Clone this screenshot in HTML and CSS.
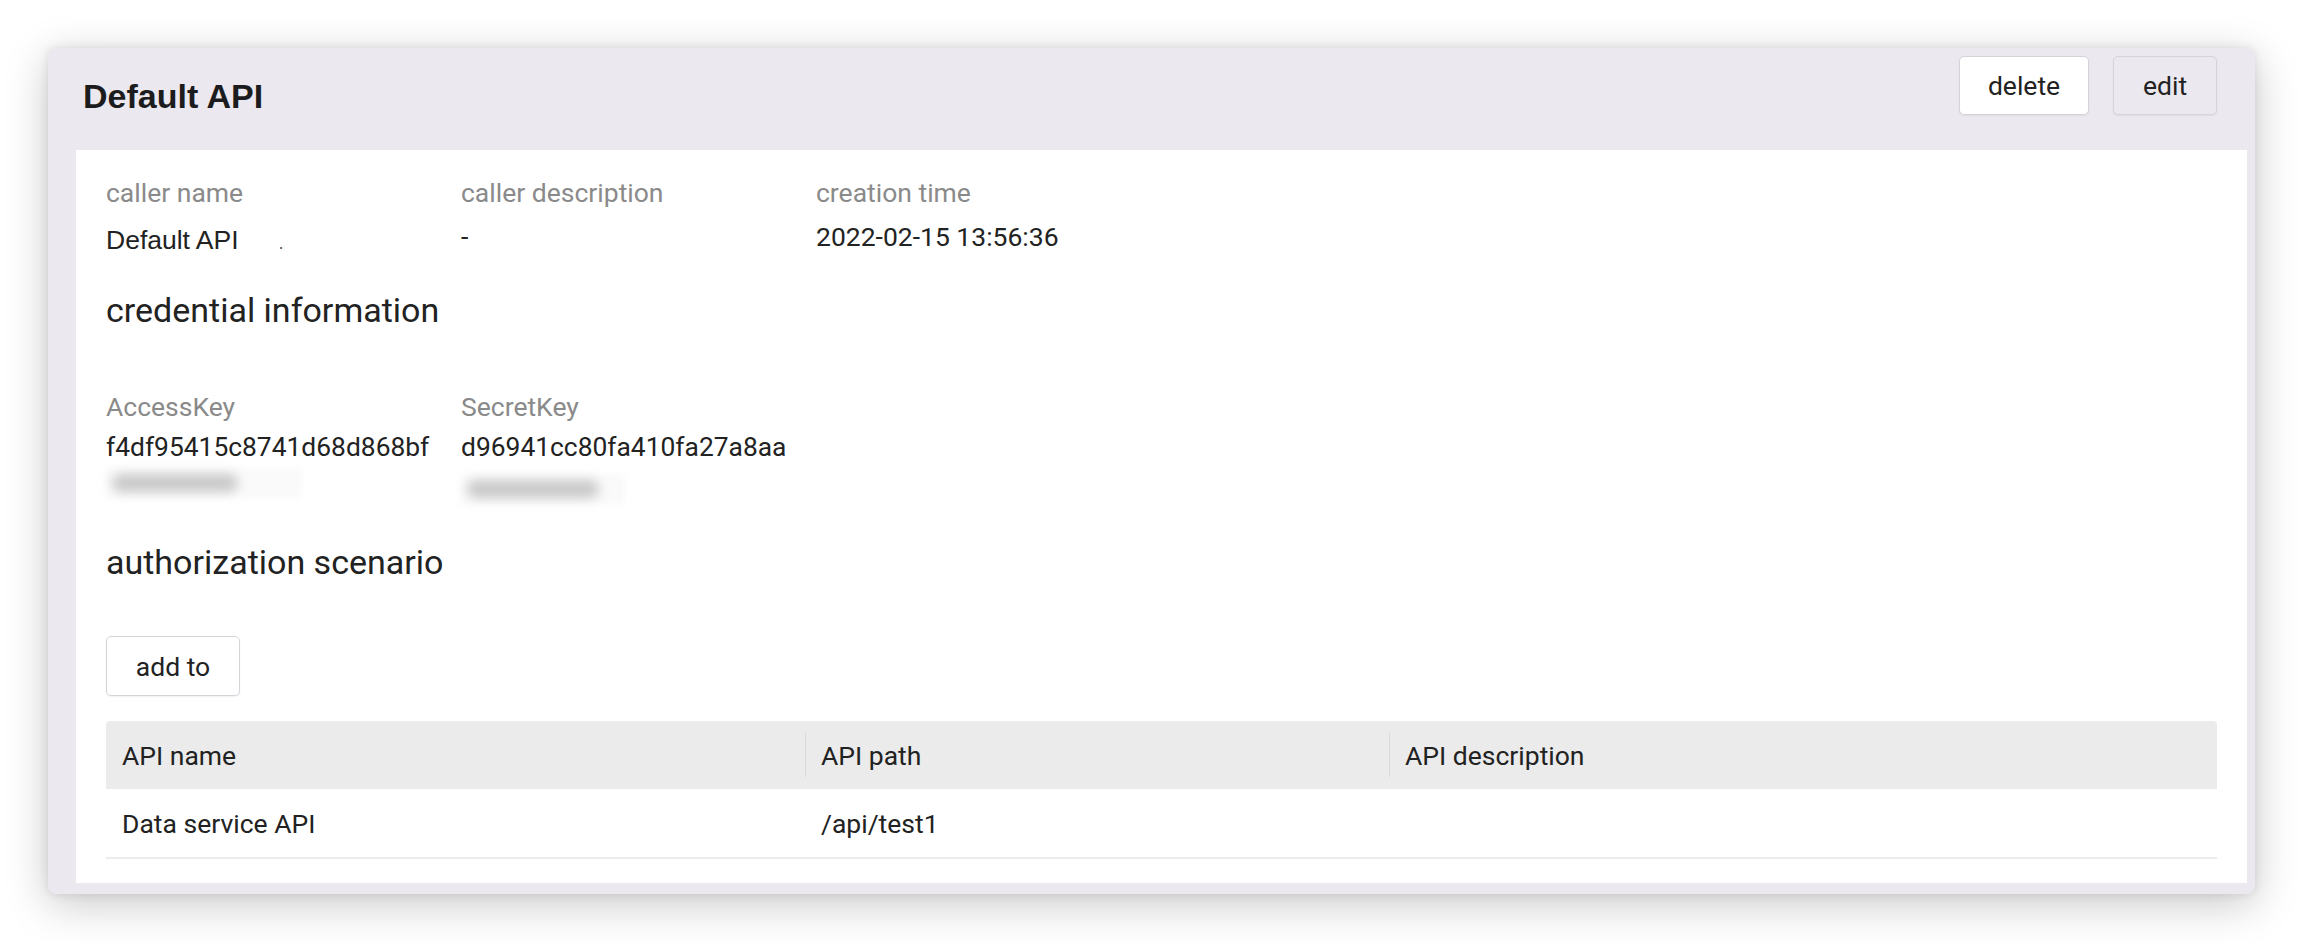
FILE: index.html
```html
<!DOCTYPE html>
<html lang="en">
<head>
<meta charset="utf-8">
<title>Default API</title>
<link rel="stylesheet" href="styles.css">
</head>
<body>
<div class="card">
  <div class="card-head">
    <h1 class="title">Default API</h1>
    <div class="actions">
      <button class="btn btn-white">delete</button>
      <button class="btn btn-ghost">edit</button>
    </div>
  </div>
  <div class="panel">
    <div class="info-grid">
      <div class="field">
        <div class="label">caller name</div>
        <div class="value value-name">Default API<span class="dot">.</span></div>
      </div>
      <div class="field">
        <div class="label">caller description</div>
        <div class="value value-small">-</div>
      </div>
      <div class="field">
        <div class="label">creation time</div>
        <div class="value value-small">2022-02-15 13:56:36</div>
      </div>
    </div>

    <h2 class="section-title">credential information</h2>

    <div class="info-grid keys">
      <div class="field">
        <div class="label">AccessKey</div>
        <div class="key">f4df95415c8741d68d868bf</div>
        <div class="key-blur"><span class="halo"><span class="blob blob-a"></span></span></div>
      </div>
      <div class="field">
        <div class="label">SecretKey</div>
        <div class="key">d96941cc80fa410fa27a8aa</div>
        <div class="key-blur"><span class="halo halo-b"><span class="blob blob-b"></span></span></div>
      </div>
    </div>

    <h2 class="section-title section-auth">authorization scenario</h2>

    <button class="btn btn-white btn-add">add to</button>

    <div class="table">
      <div class="thead">
        <div class="th">API name</div>
        <div class="th th-sep">API path</div>
        <div class="th th-sep">API description</div>
      </div>
      <div class="trow">
        <div class="td">Data service API</div>
        <div class="td">/api/test1</div>
        <div class="td"></div>
      </div>
    </div>
  </div>
</div>
</body>
</html>
```

FILE: styles.css
```css
* { box-sizing: border-box; }

html, body {
  margin: 0;
  background: #ffffff;
}

body {
  padding: 48px 49px 50px 48px;
  font-family: Roboto, "Liberation Sans", Arial, sans-serif;
  color: #222222;
}

.card {
  background: #ebe9ef;
  border-radius: 8px;
  padding: 0 8px 11px 28px;
  box-shadow: 0 0 10px rgba(0, 0, 0, 0.10), 0 10px 44px rgba(0, 0, 0, 0.22);
}

.card-head {
  display: flex;
  justify-content: space-between;
  align-items: flex-start;
  height: 102px;
  padding: 8px 30px 0 7px;
}

.title {
  margin: 20px 0 0 0;
  font-family: "Liberation Sans", Arial, sans-serif;
  font-weight: 700;
  font-size: 34px;
  line-height: 40px;
  color: #1c1c1e;
}

.actions {
  display: flex;
  gap: 24px;
}

.btn {
  font-family: Roboto, "Liberation Sans", Arial, sans-serif;
  font-size: 26.5px;
  color: #222222;
  height: 59px;
  padding: 0;
  white-space: nowrap;
  border: 1.5px solid #d6d4da;
  border-radius: 5px;
  box-shadow: 0 1px 2px rgba(0, 0, 0, 0.06);
  display: inline-flex;
  align-items: center;
  justify-content: center;
  cursor: pointer;
}

.btn-white { background: #ffffff; }
.btn-ghost { background: #ebe9ef; }

.actions .btn-white { width: 130px; }
.actions .btn-ghost { width: 104px; }

.panel {
  background: #ffffff;
  padding: 26px 30px 24px 30px;
}

.info-grid {
  display: grid;
  grid-template-columns: 355px 355px 355px;
}

.label {
  font-size: 26.5px;
  line-height: 34px;
  color: #8a8a8a;
}

.value {
  margin-top: 12px;
  font-size: 26.5px;
  line-height: 36px;
  color: #222222;
}

.value-name {
  font-family: "Liberation Sans", Arial, sans-serif;
}

.value-small {
  margin-top: 12px;
  line-height: 30px;
}

.dot {
  margin-left: 40px;
  font-size: 18px;
  color: #555555;
}

.section-title {
  margin: 27px 0 0 0;
  font-weight: 400;
  font-size: 34px;
  line-height: 44px;
  color: #222222;
}

.keys {
  margin-top: 58px;
  grid-template-columns: 355px 355px;
}

.key {
  margin-top: 5px;
  font-size: 26.4px;
  line-height: 36px;
  color: #222222;
}

.key-blur {
  height: 36px;
  display: flex;
  align-items: center;
}

.halo {
  display: flex;
  align-items: center;
  width: 196px;
  height: 30px;
  padding-left: 6px;
  background: #fafafa;
  filter: blur(3px);
}

.halo-b {
  width: 164px;
  margin-top: 12px;
}

.blob {
  display: block;
  height: 18px;
  border-radius: 9px;
  background: #c8c8c8;
  filter: blur(5px);
}

.blob-a { width: 126px; }
.blob-b { width: 132px; }

.section-auth {
  margin-top: 39px;
}

.btn-add {
  margin-top: 52px;
  width: 134px;
  height: 60px;
}

.table {
  margin-top: 25px;
}

.thead,
.trow {
  display: grid;
  grid-template-columns: 699px 584px 1fr;
}

.thead {
  height: 68px;
  background: #ebebeb;
  border-radius: 4px 4px 0 0;
}

.th {
  position: relative;
  display: flex;
  align-items: center;
  padding-left: 16px;
  font-size: 26.5px;
  color: #222222;
}

.th-sep::before {
  content: "";
  position: absolute;
  left: 0;
  top: 12px;
  bottom: 12px;
  width: 1px;
  background: #d7d7d7;
}

.trow {
  height: 70px;
  border-bottom: 2px solid #ececec;
}

.td {
  display: flex;
  align-items: center;
  padding-left: 16px;
  font-size: 26.5px;
  color: #222222;
}
```
